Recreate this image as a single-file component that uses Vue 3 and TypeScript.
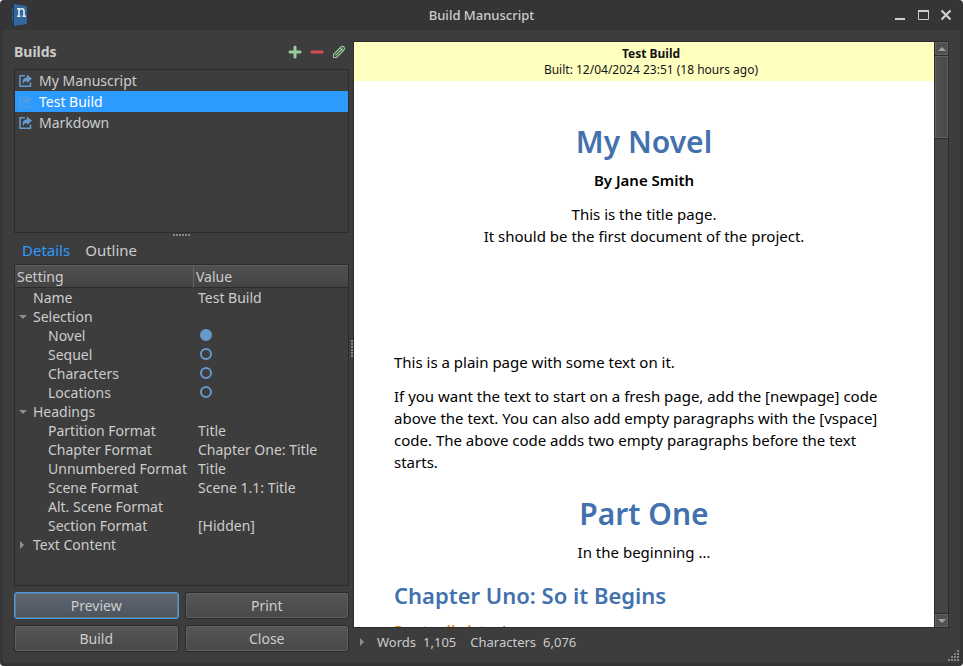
<script setup lang="ts">
import { ref } from 'vue'

interface Row {
  name: string
  level: number
  value?: string
  dot?: 'on' | 'off'
  arrow?: 'open' | 'shut'
}

const builds: string[] = ['My Manuscript', 'Test Build', 'Markdown']
const selected = ref<string>('Test Build')
const tab = ref<string>('Details')

const rows: Row[] = [
  { name: 'Name', level: 1, value: 'Test Build' },
  { name: 'Selection', level: 1, arrow: 'open' },
  { name: 'Novel', level: 2, dot: 'on' },
  { name: 'Sequel', level: 2, dot: 'off' },
  { name: 'Characters', level: 2, dot: 'off' },
  { name: 'Locations', level: 2, dot: 'off' },
  { name: 'Headings', level: 1, arrow: 'open' },
  { name: 'Partition Format', level: 2, value: 'Title' },
  { name: 'Chapter Format', level: 2, value: 'Chapter One: Title' },
  { name: 'Unnumbered Format', level: 2, value: 'Title' },
  { name: 'Scene Format', level: 2, value: 'Scene 1.1: Title' },
  { name: 'Alt. Scene Format', level: 2 },
  { name: 'Section Format', level: 2, value: '[Hidden]' },
  { name: 'Text Content', level: 1, arrow: 'shut' },
]

const actions: string[] = ['Preview', 'Print', 'Build', 'Close']
</script>

<template>
  <div class="window">
    <header class="titlebar">
      <svg class="logo" width="18" height="22" viewBox="0 0 18 22" aria-hidden="true">
        <path d="M0 2 3 0V22L0 20Z" fill="#1d3850" />
        <path d="M3 0 16 2V20L3 22Z" fill="#32669c" />
        <path d="M1.500 4V18" stroke="#60798e" stroke-dasharray="1 1" />
        <path d="M6 4.800H8V12M6 12.200H9.500M8 6.500C9.500 4 13 4.200 13 7V12M11.500 12.200H15" fill="none" stroke="#e6edf3" stroke-width="1.600" />
      </svg>
      <h1>Build Manuscript</h1>
      <div class="controls">
        <button type="button" aria-label="Minimize">
          <svg width="12" height="12" viewBox="0 0 12 12"><path d="M1 10H11" stroke="#d0d0d0" stroke-width="2" /></svg>
        </button>
        <button type="button" aria-label="Maximize">
          <svg width="12" height="12" viewBox="0 0 12 12"><path d="M1.500 2V10.500H11.500V2" fill="none" stroke="#d0d0d0" /><path d="M1 2H12" stroke="#d0d0d0" stroke-width="2" /></svg>
        </button>
        <button type="button" aria-label="Close window">
          <svg width="12" height="12" viewBox="0 0 12 12"><path d="M1.500 1.500 10.500 10.500M10.500 1.500 1.500 10.500" stroke="#d0d0d0" stroke-width="2.200" /></svg>
        </button>
      </div>
    </header>

    <main class="body">
      <section class="side">
        <div class="side-head">
          <h2>Builds</h2>
          <div class="tools">
            <button type="button" aria-label="Add build">
              <svg width="14" height="14" viewBox="0 0 14 14"><path d="M7 2V12M2 7H12" stroke="#99cc99" stroke-width="3" stroke-linecap="round" /></svg>
            </button>
            <button type="button" aria-label="Delete build">
              <svg width="14" height="14" viewBox="0 0 14 14"><path d="M2 7H12" stroke="#d54e53" stroke-width="3" stroke-linecap="round" /></svg>
            </button>
            <button type="button" aria-label="Edit build">
              <svg width="14" height="14" viewBox="0 0 14 14"><path d="M1.500 12.500V9.500L9 2Q10.500 .8 12 2 13.200 3.500 12 5L4.500 12.500ZM3.500 10.500 10.500 3.500M8 3 11 6" fill="none" stroke="#99cc99" stroke-width="1.100" stroke-linejoin="round" /></svg>
            </button>
          </div>
        </div>

        <ul class="builds">
          <li v-for="b in builds" :key="b">
            <button type="button" :class="{ active: b === selected }" @click="selected = b">
              <svg width="14" height="14" viewBox="0 0 14 14" aria-hidden="true">
                <path d="M6 1.800H1V12.200H11.500V8.500" fill="none" stroke="currentColor" stroke-width="1.600" stroke-linejoin="round" />
                <path d="M8 .5 13 4.700 8 9V7Q5 7 4 10.200 2 4 8 3.200Z" fill="currentColor" />
              </svg>
              {{ b }}
            </button>
          </li>
        </ul>

        <div class="grip"></div>

        <nav class="tabs">
          <button
            v-for="t in ['Details', 'Outline']"
            :key="t"
            type="button"
            :class="{ active: t === tab }"
            @click="tab = t"
          >{{ t }}</button>
        </nav>

        <div class="tree">
          <table>
            <thead>
              <tr><th>Setting</th><th>Value</th></tr>
            </thead>
            <tbody>
              <tr v-for="r in rows" :key="r.name">
                <td :class="'level-' + r.level">
                  <span class="cell"><span v-if="r.level === 1" class="slot"><i v-if="r.arrow" :class="['arrow', r.arrow]"></i></span>{{ r.name }}</span>
                </td>
                <td>
                  <span v-if="r.dot" :class="['dot', r.dot]"></span>
                  <template v-else>{{ r.value }}</template>
                </td>
              </tr>
            </tbody>
          </table>
        </div>

        <div class="actions">
          <button v-for="a in actions" :key="a" type="button" :class="{ primary: a === 'Preview' }">{{ a }}</button>
        </div>
      </section>

      <div class="divider"><span class="grip vertical"></span></div>

      <section class="preview">
        <div class="viewer">
          <div class="paper">
            <div class="banner">
              <strong>Test Build</strong>
              <span>Built: 12/04/2024 23:51 (18 hours ago)</span>
            </div>
            <article>
              <h1>My Novel</h1>
              <p class="center author">By Jane Smith</p>
              <p class="center">This is the title page.<br />It should be the first document of the project.</p>
              <p class="page-start">This is a plain page with some text on it.</p>
              <p>If you want the text to start on a fresh page, add the [newpage] code above the text. You can also add empty paragraphs with the [vspace] code. The above code adds two empty paragraphs before the text starts.</p>
              <h1 class="part">Part One</h1>
              <p class="center">In the beginning …</p>
              <h2>Chapter Uno: So it Begins</h2>
              <p><span class="tag">Punto di vista:</span> <a href="#jane">Jane</a></p>
            </article>
          </div>
          <div class="scrollbar">
            <button type="button" aria-label="Scroll up"><i class="tri up"></i></button>
            <div class="track"><div class="thumb"></div></div>
            <button type="button" aria-label="Scroll down"><i class="tri down"></i></button>
          </div>
        </div>
        <footer class="status">
          <i class="arrow shut"></i>
          <span>Words</span><span class="num">1,105</span>
          <span>Characters</span><span class="num">6,076</span>
        </footer>
      </section>
    </main>

    <svg class="resize" width="12" height="12" viewBox="0 0 12 12" aria-hidden="true">
      <path d="M9 1h2M6 4h2M9 4h2M3 7h2M6 7h2M9 7h2M0 10h2M3 10h2M6 10h2M9 10h2" stroke="#858585" stroke-width="2" />
    </svg>
  </div>
</template>

<style>
body {
  margin: 0;
  background: #f4f4f4;
}
</style>

<style scoped>
* {
  box-sizing: border-box;
}
button {
  padding: 0;
  border: 0;
  background: none;
  color: inherit;
  font: inherit;
}
svg {
  display: block;
}
.window {
  position: relative;
  display: flex;
  flex-direction: column;
  height: 100vh;
  overflow: hidden;
  border-radius: 4px;
  background: #353535;
  color: #cccccc;
  font: 14px/20px "Noto Sans", sans-serif;
}
.titlebar {
  display: grid;
  grid-template-columns: 1fr auto 1fr;
  align-items: center;
  height: 30px;
  flex: none;
  padding: 0 11px;
}
.titlebar h1 {
  margin: 0;
  font-size: 13px;
  font-weight: 500;
}
.controls {
  display: flex;
  justify-content: flex-end;
  gap: 11px;
}
.body {
  display: flex;
  flex: 1;
  min-height: 0;
  margin: 0 3px 3px;
  padding: 11px 11px 0;
  background: #3d3d3d;
}
.side {
  display: flex;
  flex: 0 0 36%;
  flex-direction: column;
  max-width: 335px;
  padding-bottom: 11px;
}
.side-head {
  display: flex;
  align-items: center;
  justify-content: space-between;
  height: 22px;
  margin-bottom: 6px;
  padding-right: 3px;
}
.side-head h2 {
  margin: 0;
  font-size: 14px;
  font-weight: 700;
}
.tools {
  display: flex;
  gap: 8px;
}
.builds {
  height: 164px;
  flex: none;
  margin: 0;
  padding: 0;
  border: 1px solid #2c2c2c;
  list-style: none;
}
.builds button {
  display: flex;
  align-items: center;
  gap: 6px;
  width: 100%;
  height: 21px;
  padding-left: 4px;
}
.builds svg {
  color: #6699cc;
}
.builds .active {
  background: #2d9aff;
  color: #ffffff;
}
.builds .active svg {
  color: #4f9de2;
}
.grip {
  align-self: center;
  width: 17px;
  height: 2px;
  margin: 1px 0;
  background: repeating-linear-gradient(90deg, #858585 0 2px, transparent 2px 3px);
}
.grip.vertical {
  width: 2px;
  height: 17px;
  margin: 0;
  background: repeating-linear-gradient(#858585 0 2px, transparent 2px 3px);
}
.tabs {
  display: flex;
  gap: 15px;
  height: 27px;
  align-items: center;
  flex: none;
  padding-left: 8px;
  padding-bottom: 2px;
  font-size: 15px;
}
.tabs .active {
  color: #2d9aff;
}
.tree {
  flex: 1;
  min-height: 0;
  border: 1px solid #2c2c2c;
}
table {
  width: 100%;
  border-collapse: separate;
  border-spacing: 0;
  table-layout: fixed;
}
th {
  height: 23px;
  padding: 1px 2px 0;
  border-bottom: 1px solid #2c2c2c;
  background: linear-gradient(#505050, #444444);
  box-shadow: inset 0 1px #5c5c5c;
  font-weight: 400;
  text-align: left;
}
th:first-child {
  width: 179px;
  border-right: 1px solid #626262;
}
td {
  height: 19px;
  padding: 0 4px;
  line-height: 19px;
  white-space: nowrap;
}
td.level-1 {
  padding: 0 0 0 4px;
}
td.level-2 {
  padding: 0 0 0 33px;
}
.cell {
  display: flex;
  align-items: center;
}
.slot {
  width: 14px;
}
.arrow {
  display: block;
  width: 0;
  height: 0;
  border: 4px solid transparent;
}
.arrow.open {
  border-top-color: #8e8e8e;
  border-bottom: 0;
}
.arrow.shut {
  margin-left: 1px;
  border-left-color: #8e8e8e;
  border-right: 0;
}
.dot {
  display: block;
  width: 12px;
  height: 12px;
  margin: 0 0 1px 2px;
  border: 2px solid #6699cc;
  border-radius: 50%;
}
.dot.on {
  background: #6699cc;
}
.actions {
  display: grid;
  grid-template-columns: 1fr 1fr;
  gap: 6px;
  margin-top: 6px;
}
.actions button {
  height: 27px;
  border: 1px solid #2a2a2a;
  border-radius: 3px;
  background: linear-gradient(#565656, #484848);
  box-shadow: inset 0 0 0 1px #626262;
}
.actions .primary {
  border-color: #469fee;
  background: linear-gradient(#606873, #4c535d);
  box-shadow: inset 0 0 0 1px #6d7580;
}
.divider {
  display: flex;
  flex: 0 0 4px;
  align-items: center;
  justify-content: flex-end;
  padding-bottom: 8px;
}
.preview {
  display: flex;
  flex: 1;
  flex-direction: column;
  min-width: 0;
}
.viewer {
  display: flex;
  flex: 1;
  min-height: 0;
  border: 1px solid #2c2c2c;
}
.paper {
  flex: 1;
  overflow: hidden;
  background: #ffffff;
  color: #000000;
}
.banner {
  display: flex;
  flex-direction: column;
  align-items: center;
  height: 39px;
  padding-top: 4px;
  padding-left: 14px;
  background: #ffffc0;
  color: #141414;
  font-size: 12px;
  line-height: 16px;
}
article {
  padding: 39px 40px;
  font-size: 15px;
  line-height: 22px;
}
article h1,
article h2 {
  margin: 0;
  color: #4271ae;
  font-weight: 600;
}
article h1 {
  margin-bottom: 5px;
  font-size: 30px;
  line-height: 44px;
  text-align: center;
}
article h2 {
  margin: 16px 0 8px;
  font-size: 22px;
  line-height: 32px;
}
article p {
  margin: 0 0 12px;
}
article .center {
  text-align: center;
}
article .author {
  font-weight: 600;
}
article .page-start {
  margin-top: 104px;
}
article .part {
  margin-top: 19px;
}
.tag {
  color: #f5871f;
  font-weight: 600;
}
article a {
  color: #4271ae;
  text-decoration: none;
}
.scrollbar {
  display: flex;
  flex: 0 0 14px;
  flex-direction: column;
  border-left: 1px solid #2c2c2c;
  background: #454545;
}
.scrollbar button {
  display: flex;
  align-items: center;
  justify-content: center;
  height: 13px;
  border: 1px solid #626262;
  background: #505050;
}
.track {
  flex: 1;
  border-top: 1px solid #2c2c2c;
  border-bottom: 1px solid #2c2c2c;
}
.thumb {
  height: 82px;
  border: 1px solid #626262;
  background: linear-gradient(90deg, #515151, #484848);
  box-shadow: 0 1px #2c2c2c;
}
.tri {
  border: 4px solid transparent;
}
.tri.up {
  border-top: 0;
  border-bottom-color: #a0a0a0;
}
.tri.down {
  border-bottom: 0;
  border-top-color: #a0a0a0;
}
.status {
  display: flex;
  align-items: center;
  flex: none;
  height: 35px;
  padding: 0 0 7px 6px;
  font-size: 13px;
}
.status .arrow {
  margin-right: 13px;
}
.status .num {
  margin: 0 14px 0 7px;
}
.resize {
  position: absolute;
  right: 3px;
  bottom: 4px;
}
</style>
